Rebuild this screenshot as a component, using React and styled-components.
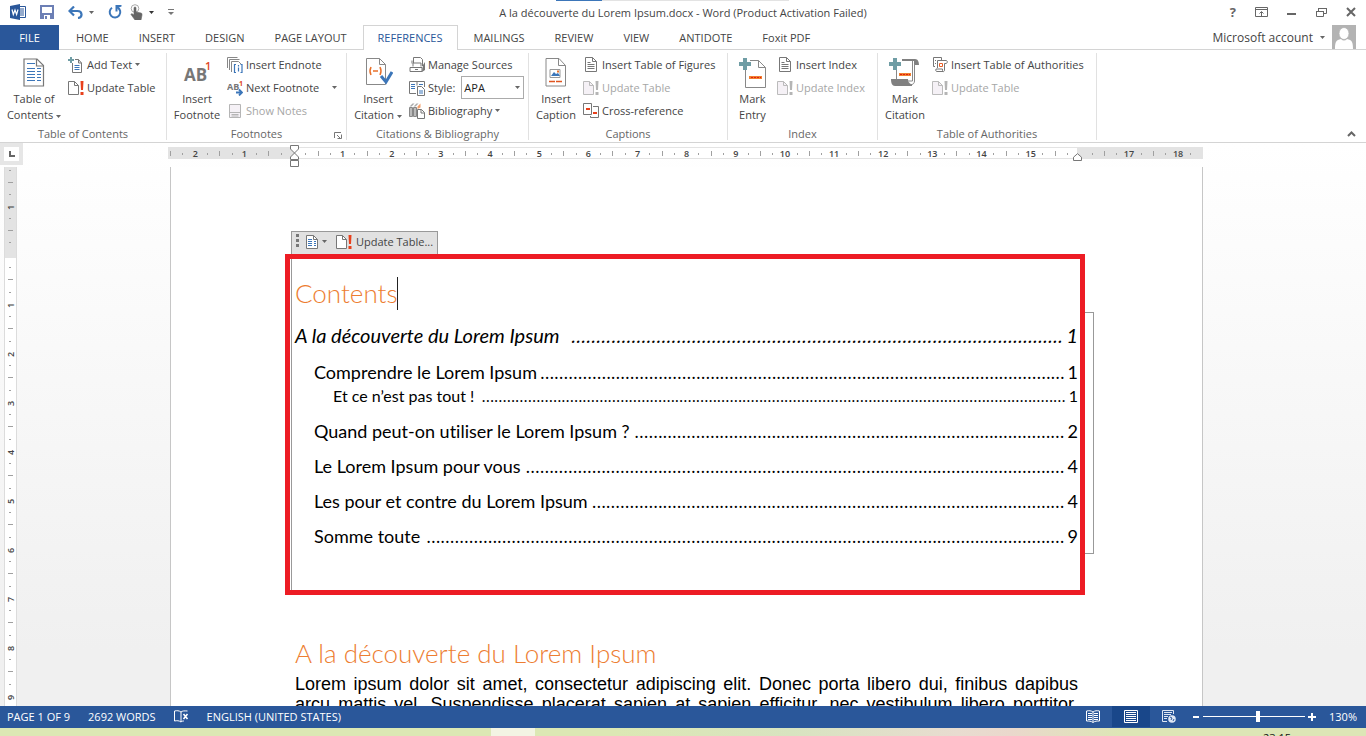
import React from "react";
import styled, { createGlobalStyle, css } from "styled-components";

const uiFont = `"Open Sans", "Noto Sans", sans-serif`;
const docFont = `Lato, "Open Sans", sans-serif`;

const tabs = [
  "HOME",
  "INSERT",
  "DESIGN",
  "PAGE LAYOUT",
  "REFERENCES",
  "MAILINGS",
  "REVIEW",
  "VIEW",
  "ANTIDOTE",
  "Foxit PDF",
];

const entries = [
  { level: 1, text: "A la découverte du Lorem Ipsum", page: 1, dots: 98 },
  { level: 2, text: "Comprendre le Lorem Ipsum", page: 1, dots: 111 },
  { level: 3, text: "Et ce n’est pas tout !", page: 1, dots: 139 },
  { level: 2, text: "Quand peut-on utiliser le Lorem Ipsum ?", page: 2, dots: 91 },
  { level: 2, text: "Le Lorem Ipsum pour vous", page: 4, dots: 114 },
  { level: 2, text: "Les pour et contre du Lorem Ipsum", page: 4, dots: 100 },
  { level: 2, text: "Somme toute", page: 9, dots: 135 },
];

/* ---------- icons ---------- */

const Icon = ({ w = 16, h = 16, children }) => (
  <svg width={w} height={h} viewBox={`0 0 ${w} ${h}`} fill="none" aria-hidden="true">
    {children}
  </svg>
);

const Caret = ({ color = "#666" }) => (
  <Icon w={5} h={3}>
    <path d="M0 0h5L2.5 3z" fill={color} />
  </Icon>
);

const WordLogo = () => (
  <Icon>
    <path d="M8.5 2.5h7v11h-7z" fill="#fff" stroke="#2a579a" />
    <path d="M10 5h4M10 7h4M10 9h4M10 11h4" stroke="#2a579a" />
    <path d="M0 2l10-2v16L0 14z" fill="#2a579a" />
    <path d="M2 5.5l1.3 5L5 6l1.6 4.5L8 5.500" stroke="#fff" strokeWidth="1.2" />
  </Icon>
);

const SaveIcon = () => (
  <Icon w={14} h={14}>
    <path d="M1 1h12v12H1z" stroke="#6c7fb5" strokeWidth="2" />
    <path d="M1 8h12v5H1z" fill="#6c7fb5" />
    <path d="M4 10h6v4H4z" fill="#fff" />
    <path d="M5 11h2v3H5z" fill="#6c7fb5" />
  </Icon>
);

const UndoIcon = () => (
  <Icon w={15} h={13}>
    <path d="M6 .5L1.5 5 6 9.5M2 5h7.500c5 0 5.500 6.500.5 7" stroke="#3c76b9" strokeWidth="2.2" />
  </Icon>
);

const RedoIcon = () => (
  <Icon w={14} h={14}>
    <path d="M4 2.800A5.300 5.300 0 1 0 9.500 2.500" stroke="#3c76b9" strokeWidth="2" />
    <path d="M7.500 0h6v1.500L9.500 3v3.500h-2z" fill="#3c76b9" />
  </Icon>
);

const TouchIcon = () => (
  <Icon w={13} h={16}>
    <circle cx="5" cy="4.5" r="3.8" stroke="#aaa" />
    <path d="M4 4c0-1.500 2-1.500 2 0v4l5 1c1 .3 1 1 1 2l-1 5H5L1 10.500c0-1 1-1 1.500-.5L4 11z" fill="#666" stroke="#666" strokeWidth=".6" />
  </Icon>
);

const ContentsIcon = () => (
  <Icon w={22} h={29}>
    <path d="M1 1h13l6.500 6.500V28H1z" fill="#fff" stroke="#777" strokeWidth="1.2" />
    <path d="M13.500 1v7h7" stroke="#777" strokeWidth="1.2" />
    <path d="M4 5.500h8M4 10.500h8M4 13.500h8M4 16.500h8M4 19.500h8M4 22.500h8" stroke="#3c76b9" />
    <path d="M14 10.500h4M14 13.500h4M14 16.500h4M14 19.500h4M14 22.500h4" stroke="#3c76b9" />
  </Icon>
);

const FootnoteIcon = () => (
  <Icon w={30} h={30}>
    <text x="2" y="23" fontSize="17" fontWeight="700" fill="#777">AB</text>
    <text x="23" y="12" fontSize="11" fontWeight="600" fill="#e0451f">1</text>
  </Icon>
);

const CitationIcon = () => (
  <Icon w={30} h={30}>
    <path d="M3.500.5h13l6 6v20h-19z" fill="#fff" stroke="#888" />
    <path d="M16.500.5v6h6" stroke="#888" />
    <path d="M8 9c-1.500 3-1.500 5 0 8M17 9c1.500 3 1.500 5 0 8M10 13h5" stroke="#e8702a" strokeWidth="1.5" />
    <path d="M18 18l5 6 6-10" stroke="#3c76b9" strokeWidth="3" />
  </Icon>
);

const CaptionIcon = () => (
  <Icon w={22} h={29}>
    <path d="M1 .5h13l6.500 7V28H1z" fill="#fff" stroke="#888" />
    <path d="M13.500.5v7h7" stroke="#888" />
    <path d="M5 11.500h10v8H5z" fill="#fff" stroke="#999" />
    <path d="M6 18l3-4 2 2 2-1 2 3z" fill="#3c76b9" />
    <path d="M12 12.500h2v2h-2z" fill="#e8702a" />
    <path d="M4 23.500h6M11 23.500h6" stroke="#e0551f" strokeWidth="1.5" />
  </Icon>
);

const MarkEntryIcon = () => (
  <Icon w={28} h={31}>
    <path d="M6.500 11v18.500h20v-20l-7-7H11" stroke="#888" fill="#fff" />
    <path d="M19.500 2.500v7h7" stroke="#888" />
    <path d="M4 0h4v4h4v4H8v4H4V8H0V4h4z" fill="#6f9da5" />
    <path d="M10 18h13v3H10z" fill="#f08030" />
    <path d="M12 19.500h2m1 0h2m1 0h2m1 0h1" stroke="#e02010" />
  </Icon>
);

const MarkCitationIcon = () => (
  <Icon w={32} h={30}>
    <path d="M7.500 10v13h16V2.500H14" fill="#fff" stroke="#888" />
    <path d="M13 1h13c3 0 4 3 4 6h-5V3H13z" fill="#808080" />
    <path d="M2 21h17c0 3 1 5 4 5v2H6c-3 0-4-3-4-7z" fill="#808080" />
    <path d="M25.500 6v17c0 4-5 5-6 1" stroke="#888" />
    <path d="M4 0h4v4h4v4H8v4H4V8H0V4h4z" fill="#6f9da5" />
    <path d="M10 15h12v3H10z" fill="#f08030" />
    <path d="M11 16.500h2m1 0h2m1 0h2m1 0h1" stroke="#e02010" />
  </Icon>
);

const AddTextIcon = () => (
  <Icon>
    <path d="M4.500 6v9.500h9V6l-3-3.500H7" stroke="#777" fill="#fff" />
    <path d="M10.500 2.500V6h3" stroke="#777" />
    <path d="M6.500 8.500h5M6.500 10.500h5M6.500 12.500h5" stroke="#3c76b9" />
    <path d="M3 0v6M0 3h6" stroke="#6f9da5" strokeWidth="2" />
  </Icon>
);

const UpdateIcon = ({ muted }) => (
  <Icon>
    <path d="M.5 1.500h6l4 4v9H.5z" fill={muted ? "#f5f1f6" : "#fff"} stroke={muted ? "#bbb" : "#777"} />
    <path d="M6.500 1.500v4h4" stroke={muted ? "#bbb" : "#777"} />
    <path d="M12.500 1h3l-.5 9h-2zM12.500 12h3v3h-3z" fill={muted ? "#b5b5b5" : "#e8401c"} />
  </Icon>
);

const EndnoteIcon = () => (
  <Icon>
    <path d="M.5 11V.500h10M2.500 13V2.500h10M4.500 15V4.500h7l3 3" stroke="#888" />
    <path d="M9 7.500H7.500v8H9M13.500 7.500H15v8h-1.500M11.500 8v1.500M11.500 10.500v4" stroke="#3c76b9" strokeWidth="1.2" />
  </Icon>
);

const NextNoteIcon = () => (
  <Icon>
    <text x="0" y="10" fontSize="9" fontWeight="700" fill="#777">AB</text>
    <text x="12" y="6" fontSize="7" fontWeight="700" fill="#e0451f">1</text>
    <path d="M9 12.500h5M12 9.500l3 3-3 3" stroke="#3c76b9" strokeWidth="1.8" />
  </Icon>
);

const ShowNotesIcon = () => (
  <Icon>
    <path d="M2.500 1.500h11v13h-11z" fill="#f5f1f6" stroke="#b5b5b5" />
    <path d="M2.500 9.500h11M4.500 11.500h7M4.500 13h7" stroke="#b5b5b5" />
  </Icon>
);

const SourcesIcon = () => (
  <Icon>
    <path d="M4.500 6V.500h7l2 2V9M3 6.500V3.500M4 9.500V6h8v3.500M1 10.500h12v4H1zM6 12.500h3" stroke="#777" />
    <path d="M14 8l2-3v8l-3 2z" fill="#777" />
  </Icon>
);

const StyleIcon = () => (
  <Icon>
    <path d="M8 1.500H.5v12H7M8 1.500v4M8 1.500h7.500V7" stroke="#777" />
    <path d="M2 4.500h4M2 6.500h4M2 8.500h4M10 4.500h4" stroke="#3c76b9" />
    <path d="M8.500 6.500h4l3 3v6h-7z" stroke="#777" fill="#fff" />
    <path d="M10 11h4M10 13h4" stroke="#3c76b9" />
  </Icon>
);

const BibliographyIcon = () => (
  <Icon>
    <path d="M.5 4.500h3v9h-3zM4.500 4.500h3v9h-3z" stroke="#888" fill="#bbb" />
    <path d="M.5 3.500l3-3h2l-3 3zM4.500 3.500l3-3h2l-3 3z" fill="#aaa" />
    <path d="M8.500 3.500l3-3v4l-3 1.500z" fill="#f4a06c" />
    <path d="M8.500 6.500h4l3 3v6h-7z" stroke="#777" fill="#fff" />
    <path d="M12 6.500V10h3.500" stroke="#777" />
  </Icon>
);

const ListPageIcon = () => (
  <Icon>
    <path d="M2.500.5h7l4 4v10h-11z" fill="#fff" stroke="#777" />
    <path d="M9.500.5v4h4M4.500 5.500h3M4.500 7.500h7M4.500 9.500h7M4.500 11.500h7" stroke="#777" />
  </Icon>
);

const CrossRefIcon = () => (
  <Icon>
    <path d="M.5.5h8v11h-8zM10 3.500h5.500v11h-8V13" stroke="#777" />
    <path d="M3 5h4v2H3zM10 9h4v2h-4z" fill="#e8401c" />
  </Icon>
);

const AuthoritiesIcon = () => (
  <Icon>
    <path d="M3 9.500H1.500v-9h8V3M3 3.500h1M3 6.500h1" stroke="#777" />
    <path d="M5.500 11V3.500h8.500c2 0 1.500 3 0 3h-1.500V13c0 2-2 2-2 .5V12H4c-.5 2 0 2.500 1 2.500h6" stroke="#777" fill="#fff" />
    <path d="M7.500 6.500h3v3h-3z" stroke="#e8602a" />
  </Icon>
);

const MiniContentsIcon = () => (
  <Icon w={12} h={14}>
    <path d="M.5.5h7l4 4v9H.5z" fill="#fff" stroke="#777" />
    <path d="M7.500.5v4h4" stroke="#777" />
    <path d="M2 4.500h4M2 6.500h4M2 8.500h4M2 10.500h4M8 6.500h2M8 8.500h2M8 10.500h2" stroke="#3c76b9" />
  </Icon>
);

const ProofIcon = () => (
  <Icon w={15} h={13}>
    <path d="M7 2C5 .5 3 .5.500 1v10c2.500-.5 4.500-.5 6.500 1 1-1 2-1 3-1M7 2v10M7 2C8.500.8 10 .8 13.500 1" stroke="#fff" />
    <path d="M9.500 4l4 5M13.500 4l-4 5" stroke="#fff" strokeWidth="1.6" />
  </Icon>
);

const ReadIcon = () => (
  <Icon w={14} h={13}>
    <path d="M7 2C5 .5 3 .5.500 1v10c2.500 0 4.500 0 6.500 1.500 2-1.500 4-1.500 6.500-1.500V1C11 .5 9 .5 7 2zM7 2v10" stroke="#fff" />
    <path d="M2 3.500h4M2 5.500h4M2 7.500h4M2 9.500h4M8 3.500h4M8 5.500h4M8 7.500h4M8 9.500h4" stroke="#fff" />
  </Icon>
);

const PrintIcon = () => (
  <Icon w={14} h={13}>
    <path d="M.5.5h13v12H.5zM2 2.500h10M2 4.500h10M2 6.500h10M2 8.500h10M2 10.500h10" stroke="#fff" />
  </Icon>
);

const WebIcon = () => (
  <Icon w={14} h={13}>
    <path d="M5 11.500H.5V.5h11V4M2 2.500h8M2 4.500h7M2 6.500h4M2 8.500h3" stroke="#dfe7f3" />
    <circle cx="10" cy="9" r="3.8" fill="#dfe7f3" />
    <path d="M8 7l2 1-1 2M12 9l-1 2" stroke="#2a579a" />
  </Icon>
);

/* ---------- parts ---------- */

const GlobalStyle = createGlobalStyle`
  * { box-sizing: border-box; }
  body { margin: 0; font-family: ${uiFont}; color: #444; }
  button, select { font: inherit; color: inherit; }
  h1, h2, p { margin: 0; }
  svg { flex: none; display: block; }
`;

const App = () => (
  <Window>
    <GlobalStyle />
    <TitleBar>
      <QuickAccess>
        <WordLogo />
        <PlainButton aria-label="Save"><SaveIcon /></PlainButton>
        <PlainButton aria-label="Undo"><UndoIcon /><Caret /></PlainButton>
        <QuickPair>
          <PlainButton aria-label="Repeat"><RedoIcon /></PlainButton>
          <PlainButton aria-label="Touch mode"><TouchIcon /><Caret color="#333" /></PlainButton>
        </QuickPair>
        <PlainButton aria-label="Customize toolbar">
          <Icon w={6} h={6}><path d="M0 .5h6" stroke="#777" /><path d="M0 3h6L3 6z" fill="#777" /></Icon>
        </PlainButton>
      </QuickAccess>
      <WindowTitle>A la découverte du Lorem Ipsum.docx - Word (Product Activation Failed)</WindowTitle>
      <WindowButtons>
        <HelpButton aria-label="Help">?</HelpButton>
        <PlainButton aria-label="Ribbon display">
          <Icon w={13} h={10}><path d="M.5.5h12v9H.5zM.5 2.500h12M6.500 9V5M4.500 6.500l2-2 2 2" stroke="#666" /></Icon>
        </PlainButton>
        <PlainButton aria-label="Minimize">
          <Icon w={10} h={10}><path d="M0 7h9" stroke="#666" strokeWidth="2" /></Icon>
        </PlainButton>
        <PlainButton aria-label="Restore">
          <Icon w={11} h={9}><path d="M.5 3.500h7v5h-7zM2.500 3V.500h8v5H8" stroke="#666" /><path d="M0 3h8v1H0zM2 0h9v1H2z" fill="#666" /></Icon>
        </PlainButton>
        <PlainButton aria-label="Close">
          <Icon w={10} h={10}><path d="M1 1l8 8M9 1L1 9" stroke="#666" strokeWidth="2" /></Icon>
        </PlainButton>
      </WindowButtons>
      <Progress />
    </TitleBar>

    <TabBar>
      <FileTab>FILE</FileTab>
      {tabs.map((tab) => (
        <Tab key={tab} $active={tab === "REFERENCES"}>{tab}</Tab>
      ))}
      <Account>
        Microsoft account
        <Caret />
        <Icon w={24} h={24}>
          <path d="M0 0h24v24H0z" fill="#b3b3b3" />
          <path d="M3 24c0-7 1-9 6-10 2 2 4 2 6 0 5 1 6 3 6 10z" fill="#fff" />
          <ellipse cx="12" cy="8.5" rx="5" ry="6" fill="#fff" stroke="#b3b3b3" strokeWidth=".8" />
        </Icon>
      </Account>
    </TabBar>

    <Ribbon>
      <Group name="Table of Contents" width={167}>
        <BigButton $width={68}><ContentsIcon /><span>Table of<br />Contents <InlineCaret><Caret /></InlineCaret></span></BigButton>
        <Commands>
          <Command><AddTextIcon />Add Text<Caret /></Command>
          <Command><UpdateIcon />Update Table</Command>
        </Commands>
      </Group>
      <Group name="Footnotes" width={180} launcher>
        <BigButton $width={60}><FootnoteIcon /><span>Insert<br />Footnote</span></BigButton>
        <Commands>
          <Command><EndnoteIcon />Insert Endnote</Command>
          <Command $spread><NextNoteIcon />Next Footnote<Caret /></Command>
          <Command disabled><ShowNotesIcon />Show Notes</Command>
        </Commands>
      </Group>
      <Group name="Citations & Bibliography" width={182}>
        <BigButton $width={62}><CitationIcon /><span>Insert<br />Citation <InlineCaret><Caret /></InlineCaret></span></BigButton>
        <Commands>
          <Command><SourcesIcon />Manage Sources</Command>
          <StyleField>
            <StyleIcon />
            <label htmlFor="style">Style:</label>
            <SelectBox>
              <StyleSelect id="style" defaultValue="APA"><option>APA</option></StyleSelect>
              <Caret />
            </SelectBox>
          </StyleField>
          <Command><BibliographyIcon />Bibliography<Caret /></Command>
        </Commands>
      </Group>
      <Group name="Captions" width={199}>
        <BigButton $width={54}><CaptionIcon /><span>Insert<br />Caption</span></BigButton>
        <Commands>
          <Command><ListPageIcon />Insert Table of Figures</Command>
          <Command disabled><UpdateIcon muted />Update Table</Command>
          <Command><CrossRefIcon />Cross-reference</Command>
        </Commands>
      </Group>
      <Group name="Index" width={150}>
        <BigButton $width={49}><MarkEntryIcon /><span>Mark<br />Entry</span></BigButton>
        <Commands>
          <Command><ListPageIcon />Insert Index</Command>
          <Command disabled><UpdateIcon muted />Update Index</Command>
        </Commands>
      </Group>
      <Group name="Table of Authorities" width={219}>
        <BigButton $width={54}><MarkCitationIcon /><span>Mark<br />Citation</span></BigButton>
        <Commands>
          <Command><AuthoritiesIcon />Insert Table of Authorities</Command>
          <Command disabled><UpdateIcon muted />Update Table</Command>
        </Commands>
      </Group>
      <CollapseButton aria-label="Collapse ribbon">
        <Icon w={9} h={6}><path d="M1 5l3.500-3.500L8 5" stroke="#666" strokeWidth="2" /></Icon>
      </CollapseButton>
    </Ribbon>

    <Workspace>
      <RulerRow>
        <TabCorner><TabStop><Icon w={6} h={6}><path d="M1 0v5h5" stroke="#666" strokeWidth="2" /></Icon></TabStop></TabCorner>
        <HorizontalRuler />
      </RulerRow>
      <Canvas>
        <SideRuler />
        <Document />
      </Canvas>
    </Workspace>

    <StatusBar>
      <StatusText>PAGE 1 OF 9</StatusText>
      <StatusText>2692 WORDS</StatusText>
      <ProofIcon />
      <StatusText>ENGLISH (UNITED STATES)</StatusText>
      <ViewButtons>
        <ViewButton aria-label="Read mode"><ReadIcon /></ViewButton>
        <ViewButton aria-label="Print layout" $active><PrintIcon /></ViewButton>
        <ViewButton aria-label="Web layout"><WebIcon /></ViewButton>
      </ViewButtons>
      <Zoom>
        <PlainButton aria-label="Zoom out"><Icon w={10} h={10}><path d="M2 5h6" stroke="#fff" strokeWidth="2" /></Icon></PlainButton>
        <ZoomSlider type="range" min="0" max="100" defaultValue="54" aria-label="Zoom" />
        <PlainButton aria-label="Zoom in"><Icon w={10} h={10}><path d="M1 5h8M5 1v8" stroke="#fff" strokeWidth="2" /></Icon></PlainButton>
      </Zoom>
      <ZoomValue>130%</ZoomValue>
    </StatusBar>
    <Taskbar>
      <TaskItem />
      <Clock>23:15</Clock>
    </Taskbar>
  </Window>
);

const Group = ({ name, width, launcher, children }) => (
  <GroupBox $width={width}>
    <GroupBody>{children}</GroupBody>
    <GroupLabel>
      {name}
      {launcher && (
        <Launcher aria-label={`${name} options`}>
          <Icon w={8} h={7}><path d="M.5 6V.500H7M3 3l3 3M7.500 2.500v4h-4" stroke="#777" /></Icon>
        </Launcher>
      )}
    </GroupLabel>
  </GroupBox>
);

// four marks per centimetre, starting 2.5 cm left of the margin
const HorizontalRuler = () => (
  <RulerBar>
    {Array.from({ length: 84 }, (_, i) => {
      const n = (i - 10) / 4;
      if (n === 0 || n === 16) return <Mark key={i} />;
      if (i % 4 === 2) return <Mark key={i}>{Math.abs(n)}</Mark>;
      return <Mark key={i}><Tick $long={i % 4 === 0} /></Mark>;
    })}
    <LeftIndent>
      <Icon w={9} h={22}>
        <path d="M.5.5h8V4l-4 4-4-4zM4.500 8l4 4v2.500h-8V12zM.5 15.500h8v6h-8z" fill="#fff" stroke="#777" />
      </Icon>
    </LeftIndent>
    <RightIndent>
      <Icon w={9} h={8}><path d="M4.500.7l4 3.500v3.300h-8V4.200z" fill="#fff" stroke="#777" /></Icon>
    </RightIndent>
  </RulerBar>
);

const SideRuler = () => (
  <VerticalBar>
    <VerticalMargin>
      {["dot", "tick", "dot", 1, "dot", "tick", "dot"].map((m, i) => (
        <SideMark key={i}>{typeof m === "number" ? m : <SideTick $long={m === "tick"} />}</SideMark>
      ))}
    </VerticalMargin>
    <VerticalPage>
      {[1, 2, 3, 4, 5, 6, 7, 8, 9].map((n) => (
        <Centimetre key={n}>
          <SideMark><SideTick /></SideMark>
          <SideMark><SideTick $long /></SideMark>
          <SideMark><SideTick /></SideMark>
          <SideMark>{n}</SideMark>
        </Centimetre>
      ))}
    </VerticalPage>
  </VerticalBar>
);

const Document = () => (
  <Page>
    <TocHandle>
      <Grip />
      <HandleButton aria-label="Table of contents"><MiniContentsIcon /><Caret /></HandleButton>
      <HandleButton><UpdateIcon />Update Table...</HandleButton>
    </TocHandle>
    <Highlight>
      <Bracket />
      <TocField>
        <Heading>Contents<TextCursor /></Heading>
        {entries.map((entry) => (
          <Entry key={entry.text} href="#top" $level={entry.level}>
            <span>{entry.text}</span>
            <Leader aria-hidden="true">{".".repeat(entry.dots)}</Leader>
            <span>{entry.page}</span>
          </Entry>
        ))}
      </TocField>
    </Highlight>
    <Section>
      <Heading>A la découverte du Lorem Ipsum</Heading>
      <Paragraph>
        Lorem ipsum dolor sit amet, consectetur adipiscing elit. Donec porta libero dui, finibus dapibus
        arcu mattis vel. Suspendisse placerat sapien at sapien efficitur, nec vestibulum libero porttitor.
      </Paragraph>
    </Section>
  </Page>
);

/* ---------- styles ---------- */

const Window = styled.div`
  display: flex;
  flex-direction: column;
  height: 100vh;
  background: #fff;
  font-size: 11px;
  overflow: hidden;
`;

const PlainButton = styled.button`
  display: flex;
  align-items: center;
  gap: 6px;
  padding: 0;
  border: 0;
  background: none;
`;

const TitleBar = styled.header`
  position: relative;
  display: grid;
  grid-template-columns: 1fr auto 1fr;
  align-items: center;
  height: 25px;
  padding: 0 10px 3px;
`;

const QuickAccess = styled.div`
  display: flex;
  align-items: center;
  gap: 14px;
  height: 22px;
`;

const QuickPair = styled.div`
  display: flex;
  gap: 8px;
`;

const WindowTitle = styled.h1`
  font-size: 11px;
  font-weight: 400;
  line-height: 22px;
  padding-top: 2px;
`;

const WindowButtons = styled.div`
  display: flex;
  justify-content: flex-end;
  align-items: center;
  gap: 19px;
  height: 22px;
`;

const HelpButton = styled(PlainButton)`
  font-size: 13px;
  font-weight: 700;
  color: #666;
`;

const Progress = styled.div`
  position: absolute;
  top: 0;
  left: calc(50% - 127px);
  width: 233px;
  height: 1px;
  background: linear-gradient(to right, #3c76b9 46px, #e3e3e3 46px);
`;

const TabBar = styled.nav`
  display: flex;
  height: 25px;
  box-shadow: inset 0 -1px #d4d4d4;
`;

const Tab = styled.button`
  height: 25px;
  padding: 0 14px 2px;
  border: 1px solid transparent;
  border-bottom: 0;
  background: none;
  font-size: 11px;
  white-space: nowrap;

  ${({ $active }) =>
    $active &&
    css`
      margin: 0 1px;
      border-color: #d4d4d4;
      background: #fff;
      color: #2a579a;
    `}
`;

const FileTab = styled(Tab)`
  width: 59px;
  margin-right: 2px;
  background: #2a579a;
  color: #fff;
`;

const Account = styled.div`
  display: flex;
  align-items: center;
  gap: 7px;
  height: 24px;
  margin-left: auto;
  padding-right: 10px;
  font-size: 12px;
`;

const Ribbon = styled.section`
  display: flex;
  height: 93px;
  padding-top: 3px;
  border-bottom: 1px solid #d4d4d4;
`;

const GroupBox = styled.div`
  display: flex;
  flex-direction: column;
  flex: none;
  width: ${({ $width }) => $width}px;
  height: 87px;
  border-right: 1px solid #e1e1e1;
`;

const GroupBody = styled.div`
  display: flex;
  flex: 1;
`;

const GroupLabel = styled.div`
  position: relative;
  height: 12px;
  line-height: 12px;
  text-align: center;
  color: #666;
`;

const Launcher = styled(PlainButton)`
  position: absolute;
  right: 4px;
  top: 4px;
`;

const BigButton = styled.button`
  display: grid;
  grid-template-rows: 33px auto;
  justify-items: center;
  align-content: start;
  flex: none;
  width: ${({ $width }) => $width}px;
  padding: 5px 0 0;
  border: 0;
  background: none;
  line-height: 16px;
  white-space: nowrap;
`;

const InlineCaret = styled.span`
  display: inline-block;
  vertical-align: middle;
`;

const Commands = styled.div`
  display: flex;
  flex-direction: column;
  align-items: flex-start;
`;

const Command = styled.button`
  display: flex;
  align-items: center;
  gap: 3px;
  height: 23px;
  padding: 0;
  border: 0;
  background: none;
  white-space: nowrap;

  &:disabled {
    color: #a6a6a6;
  }

  > svg:last-child {
    margin-left: ${({ $spread }) => ($spread ? "10px" : "0")};
  }
`;

const StyleField = styled.div`
  display: flex;
  align-items: center;
  gap: 3px;
  height: 23px;
`;

const SelectBox = styled.div`
  position: relative;
  margin-left: 3px;

  svg {
    position: absolute;
    right: 4px;
    top: 10px;
    pointer-events: none;
  }
`;

const StyleSelect = styled.select`
  appearance: none;
  width: 63px;
  height: 23px;
  padding: 0 2px;
  border: 1px solid #ababab;
  border-radius: 0;
  background: #fff;
  color: #222;
`;

const CollapseButton = styled(PlainButton)`
  align-self: flex-end;
  margin-left: auto;
  padding: 0 10px 5px;
`;

const Workspace = styled.main`
  display: flex;
  flex-direction: column;
  flex: 1;
  min-height: 0;
  background: linear-gradient(#fff, #f0f0f0 90%);
`;

const RulerRow = styled.div`
  display: flex;
  flex: none;
  height: 24px;
  padding-right: 22px;
`;

const TabCorner = styled.div`
  width: 23px;
  height: 22px;
  padding: 4px;
  background: #e6e6e6;
`;

const TabStop = styled.div`
  display: grid;
  place-items: center;
  height: 14px;
  background: #fff;
`;

const RulerBar = styled.div`
  position: relative;
  display: grid;
  grid-template-columns: repeat(84, 1fr);
  width: 1038px;
  height: 12px;
  margin: 4px auto 0;
  padding-right: 6px;
  background:
    linear-gradient(to right, transparent 3px, #e3e3e3 3px) top / 100% 1px no-repeat,
    linear-gradient(to right, transparent 3px, #e3e3e3 3px) bottom / 100% 1px no-repeat,
    linear-gradient(to right, transparent 3px, #e3e3e3 3px 129px, #fff 129px 912px, #e3e3e3 912px);
`;

const Mark = styled.div`
  display: grid;
  place-items: center;
  min-width: 0;
  font-size: 9px;
  font-weight: 600;
  line-height: 13px;
`;

const Tick = styled.div`
  width: 1px;
  height: ${({ $long }) => ($long ? 5 : 2)}px;
  background: #a0a0a0;
`;

const LeftIndent = styled.div`
  position: absolute;
  left: 125px;
  top: -2px;
`;

const RightIndent = styled.div`
  position: absolute;
  left: 908px;
  top: 6px;
`;

const Canvas = styled.div`
  display: flex;
  flex: 1;
  min-height: 0;
  padding: 0 10px 0 4px;
`;

const VerticalBar = styled.div`
  display: flex;
  flex-direction: column;
  flex: none;
  width: 13px;
  border: solid #dcdcdc;
  border-width: 0 1px;
  overflow: hidden;
`;

const VerticalMargin = styled.div`
  display: flex;
  flex-direction: column;
  justify-content: flex-end;
  flex: none;
  height: 91px;
  padding-bottom: 9px;
  background: #e3e3e3;
`;

const VerticalPage = styled.div`
  flex: 1;
  padding-top: 4px;
  background: #fff;
`;

const Centimetre = styled.div`
  display: grid;
  grid-template-rows: repeat(4, 1fr);
  height: 49px;
`;

const SideMark = styled.div`
  display: grid;
  place-items: center;
  flex: none;
  height: 12px;
  font-size: 9px;
  font-weight: 600;
  line-height: 11px;
  writing-mode: vertical-rl;
  transform: rotate(180deg);
`;

const SideTick = styled.div`
  width: ${({ $long }) => ($long ? 5 : 2)}px;
  height: 1px;
  background: #a0a0a0;
`;

const Page = styled.article`
  width: 1033px;
  margin: 0 auto;
  padding: 64px 117px 0 114px;
  border: solid #c6c6c6;
  border-width: 0 1px;
  background: #fff;
  overflow: hidden;
`;

const TocHandle = styled.div`
  display: flex;
  gap: 9px;
  width: 147px;
  height: 23px;
  margin-left: 6px;
  padding: 0 3px 3px 4px;
  border: 1px solid #999;
  border-bottom: 0;
  background: #e1e1e1;
`;

const Grip = styled.div`
  width: 3px;
  height: 13px;
  margin: 2px -2px 0 0;
  background: repeating-linear-gradient(#777 0 3px, transparent 3px 5px);
`;

const HandleButton = styled(PlainButton)`
  gap: 4px;
  font-weight: 500;
  white-space: nowrap;
`;

const Highlight = styled.div`
  position: relative;
  padding-left: 1px;
  border: 5px solid #ed1c24;
`;

const Bracket = styled.div`
  position: absolute;
  top: 53px;
  right: -14px;
  width: 9px;
  height: 242px;
  border: 1px solid #999;
  border-left: 0;
`;

const TocField = styled.div`
  padding: 18px 2px 42px 3px;
  border-left: 1px solid #999;
`;

const Heading = styled.h2`
  display: flex;
  font-family: ${docFont};
  font-size: 26px;
  font-weight: 300;
  line-height: 33px;
  color: #ed7d31;
`;

const TextCursor = styled.span`
  width: 1px;
  background: #222;
`;

const levels = {
  1: css`
    margin-top: 13px;
    font-size: 20px;
    font-style: italic;
    line-height: 25px;

    + a {
      margin-top: 13px;
    }
  `,
  2: css`
    margin-top: 12px;
    padding-left: 19px;
    font-size: 18px;
    line-height: 23px;
  `,
  3: css`
    padding-left: 38px;
    font-size: 16px;
    line-height: 24px;
  `,
};

const Entry = styled.a`
  display: flex;
  align-items: baseline;
  gap: 3px;
  font-family: ${docFont};
  font-variant-ligatures: none;
  color: #000;
  text-decoration: none;
  white-space: nowrap;
  ${({ $level }) => levels[$level]}
`;

const Leader = styled.span`
  flex: 1;
  min-width: 0;
  height: 1lh;
  font-family: "Open Sans", sans-serif;
  text-align: right;
`;

const Section = styled.section`
  padding: 42px 7px 0 10px;
`;

const Paragraph = styled.p`
  margin-top: 4px;
  font-family: "Liberation Sans", Arial, sans-serif;
  font-size: 18px;
  line-height: 20px;
  color: #000;
  text-align: justify;
  text-align-last: justify;
`;

const StatusBar = styled.footer`
  display: flex;
  align-items: center;
  flex: none;
  gap: 18px;
  height: 22px;
  padding: 0 9px 1px 7px;
  background: #2a579a;
  color: #fff;
`;

const StatusText = styled.span`
  white-space: nowrap;
`;

const ViewButtons = styled.div`
  display: flex;
  align-self: stretch;
  margin-left: auto;
`;

const ViewButton = styled(PlainButton)`
  justify-content: center;
  width: 38px;
  background: ${({ $active }) => ($active ? "#19478a" : "none")};
`;

const Zoom = styled.div`
  display: flex;
  align-items: center;
  gap: 2px;
  margin-left: -15px;
`;

const ZoomSlider = styled.input`
  appearance: none;
  width: 102px;
  height: 12px;
  margin: 0;
  background: linear-gradient(#fff, #fff) center / 100% 1px no-repeat;

  &::-webkit-slider-thumb {
    appearance: none;
    width: 4px;
    height: 11px;
    background: #fff;
  }
`;

const ZoomValue = styled.span`
  width: 28px;
  margin-left: -6px;
  text-align: right;
`;

const Taskbar = styled.div`
  display: flex;
  justify-content: space-between;
  flex: none;
  height: 8px;
  padding: 0 75px 0 491px;
  background: linear-gradient(
    to right,
    #dce8b4 0 45%,
    #d8e4c0 58%,
    #e8dcd0 70%,
    #ead8cc 74%,
    #dde6b6 82%
  );
  overflow: hidden;
`;

const TaskItem = styled.div`
  width: 44px;
  background: #f3f4e3;
`;

const Clock = styled.span`
  padding-top: 3px;
  line-height: 14px;
  color: #111;
`;

export default App;
